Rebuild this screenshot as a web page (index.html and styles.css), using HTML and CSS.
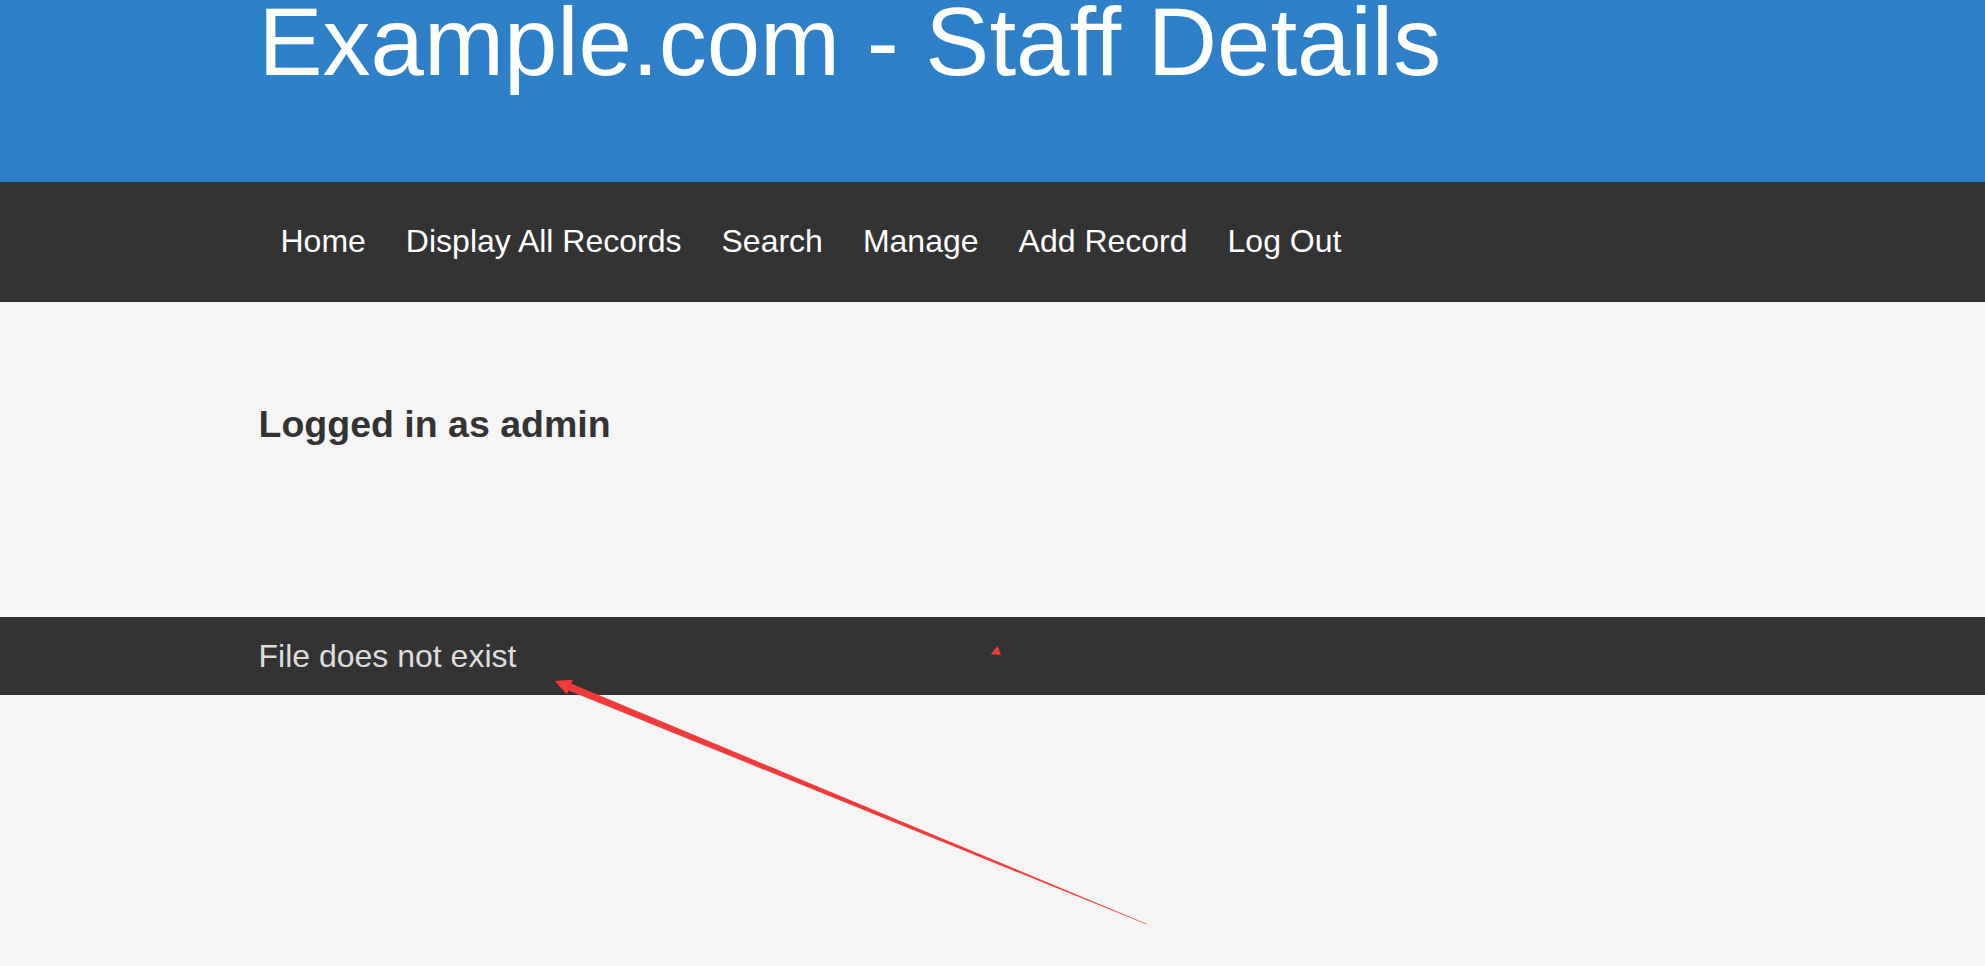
FILE: index.html
```html
<!DOCTYPE html>
<html lang="en">
<head>
<meta charset="utf-8">
<title>Example.com - Staff Details</title>
<link rel="stylesheet" href="styles.css">
</head>
<body>
<header class="site-header">
  <div class="container">
    <h1 class="site-title">Example.com - Staff Details</h1>
  </div>
</header>
<nav class="site-nav">
  <div class="container">
    <ul class="nav-list">
      <li><a class="nav-link" href="#">Home</a></li>
      <li><a class="nav-link" href="#">Display All Records</a></li>
      <li><a class="nav-link" href="#">Search</a></li>
      <li><a class="nav-link" href="#">Manage</a></li>
      <li><a class="nav-link" href="#">Add Record</a></li>
      <li><a class="nav-link" href="#">Log Out</a></li>
    </ul>
  </div>
</nav>
<main class="site-main">
  <div class="container">
    <h2 class="login-status">Logged in as admin</h2>
  </div>
</main>
<footer class="site-footer">
  <div class="container">
    <p class="footer-msg">File does not exist</p>
  </div>
</footer>
<svg class="annotation" width="1985" height="966" viewBox="0 0 1985 966" aria-hidden="true">
  <polygon points="555,681 572.8,679.7 566.8,694.5" fill="#f33a3a"/>
  <polygon points="571.1,683.6 1147.1,924.0 1146.9,924.6 568.5,690.5" fill="#f33a3a"/>
  <polygon points="997.7,646 990.7,654.3 1001,655" fill="#f33a3a"/>
</svg>
</body>
</html>
```
FILE: styles.css
```css
html, body {
  margin: 0;
  padding: 0;
}
body {
  background: #f5f5f5;
  font-family: "Liberation Sans", Arial, sans-serif;
  color: #333333;
  min-height: 966px;
  position: relative;
}
.container {
  width: 1468px;
  margin: 0 auto;
}
.site-header {
  background: #2d80c8;
  height: 182px;
  overflow: hidden;
}
.site-title {
  margin: 0;
  font-size: 96px;
  line-height: 84px;
  font-weight: normal;
  color: #ffffff;
}
.site-nav {
  background: #333333;
  height: 120px;
  box-sizing: border-box;
  padding-top: 41px;
}
.nav-list {
  list-style: none;
  margin: 0 0 0 6px;
  padding: 0;
  display: flex;
  gap: 8px;
}
.nav-link {
  display: block;
  padding: 0 16px;
  font-size: 32px;
  line-height: 36px;
  color: #ffffff;
  text-decoration: none;
}
.site-main {
  height: 315px;
  box-sizing: border-box;
  padding-top: 102px;
}
.login-status {
  margin: 0;
  font-size: 37.5px;
  line-height: 40px;
  font-weight: bold;
  color: #333333;
}
.site-footer {
  background: #333333;
  height: 78px;
  box-sizing: border-box;
  padding-top: 21px;
}
.footer-msg {
  margin: 0;
  font-size: 32px;
  line-height: 36px;
  color: #dddddd;
}
.annotation {
  position: absolute;
  left: 0;
  top: 0;
  pointer-events: none;
}
```
